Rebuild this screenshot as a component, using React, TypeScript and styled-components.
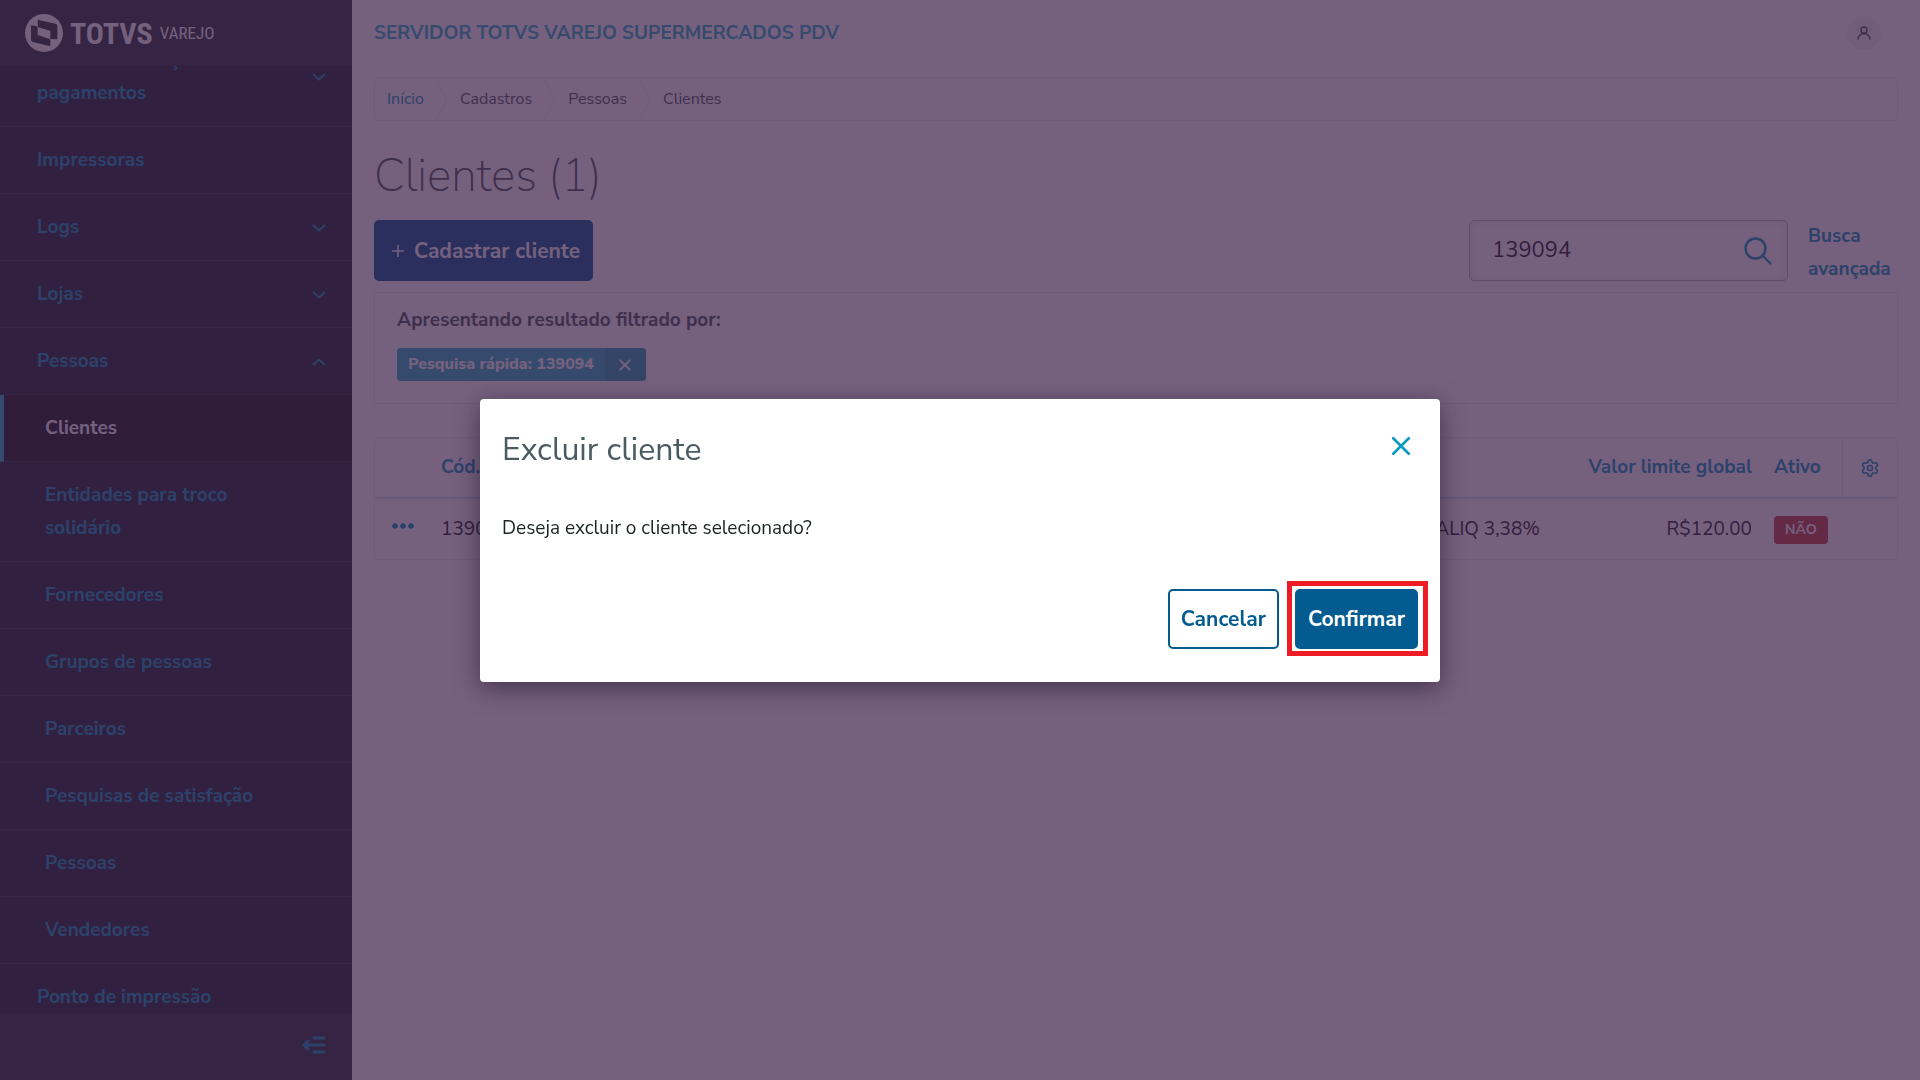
import React, { useLayoutEffect, useRef } from 'react';
import styled, { createGlobalStyle, css } from 'styled-components';
import { Settings } from 'lucide-react';

const c = {
  link: '#0c9abe',
  primary: '#045b8f',
  accent: '#29b6c5',
  text: '#1d2426',
  title: '#4a5c60',
  line: '#eceeee',
  danger: '#c64840',
};

const Global = createGlobalStyle`
  *, *::before, *::after { box-sizing: border-box; }
  body {
    margin: 0;
    background: #fff;
    color: ${c.text};
    font: 400 19px/33px "Nunito Sans", Lato, sans-serif;
  }
  button, input { font: inherit; color: inherit; }
  button { cursor: pointer; }
  a { color: ${c.link}; text-decoration: none; }
  ul, ol { list-style: none; margin: 0; padding: 0; }
  h1, h2, p { margin: 0; }
`;

const Shell = styled.div`
  display: flex;
  height: 100vh;
  overflow: hidden;
`;

const Sidebar = styled.aside`
  display: flex;
  flex-direction: column;
  flex: 0 0 352px;
  background: #2b3739;
`;

const Brand = styled.div`
  display: flex;
  align-items: center;
  flex: 0 0 66px;
  padding-left: 25px;
  gap: 7px;
  color: #fff;
  font-family: "Roboto Condensed", Roboto, sans-serif;
  svg { width: 38px; height: 38px; }
`;

const BrandName = styled.strong`
  font-size: 30px;
`;

const BrandLine = styled.span`
  font-size: 17px;
`;

const Menu = styled.nav`
  flex: 1;
  overflow-y: auto;
  scrollbar-width: none;
  background: #202b2f;
`;

const MenuLink = styled.a<{ $level?: number; $active?: boolean }>`
  display: flex;
  align-items: center;
  justify-content: space-between;
  gap: 16px;
  padding: 17px 26px 16px ${p => (p.$level ? 45 : 37)}px;
  border-bottom: 1px solid #2f3d41;
  color: ${c.link};
  font-weight: 700;
  ${p => p.$active && css`
    padding-left: 41px;
    border-left: 4px solid ${c.accent};
    background: #161f21;
    color: #fff;
  `}
`;

const MenuText = styled.span`
  max-width: 210px;
`;

const SidebarFooter = styled.div`
  display: flex;
  align-items: center;
  justify-content: flex-end;
  flex: 0 0 66px;
  padding: 0 26px 5px 0;
  border-top: 1px solid #2f3d41;
`;

const IconButton = styled.button`
  display: inline-grid;
  place-items: center;
  padding: 0;
  border: 0;
  background: none;
  color: ${c.link};
`;

const Main = styled.main`
  flex: 1;
  min-width: 0;
  padding: 0 22px;
`;

const TopBar = styled.header`
  display: flex;
  align-items: center;
  justify-content: space-between;
  height: 66px;
  padding-right: 17px;
  color: ${c.accent};
  font-weight: 700;
`;

const Avatar = styled(IconButton)`
  width: 34px;
  height: 34px;
  border-radius: 50%;
  background: #f2f4f4;
  color: ${c.title};
`;

const Crumbs = styled.ol`
  display: flex;
  height: 44px;
  margin-top: 11px;
  border: 1px solid ${c.line};
  border-radius: 4px;
  font-size: 16px;
  line-height: 42px;
`;

const Crumb = styled.li`
  display: flex;
  gap: 12px;
  padding-left: 12px;
  color: ${c.title};
  svg { width: 12px; height: 42px; }
`;

const PageTitle = styled.h1`
  margin: 25px 0 14px;
  color: ${c.title};
  font-size: 46px;
  font-weight: 200;
  line-height: 60px;
`;

const Toolbar = styled.div`
  display: flex;
  justify-content: space-between;
  align-items: center;
  height: 61px;
`;

const Button = styled.button<{ $primary?: boolean; $tall?: boolean }>`
  display: flex;
  align-items: center;
  justify-content: center;
  gap: 5px;
  height: ${p => (p.$tall ? 61 : 60)}px;
  padding: 2px 11px 0;
  border: 2px solid ${c.primary};
  border-radius: 5px;
  background: ${p => (p.$primary ? c.primary : '#fff')};
  color: ${p => (p.$primary ? '#fff' : c.primary)};
  font-size: 21px;
  font-weight: 700;
`;

const SearchArea = styled.div`
  display: flex;
  align-items: center;
  gap: 20px;
  a { width: 90px; padding-top: 4px; font-weight: 700; }
`;

const SearchBox = styled.div`
  display: flex;
  align-items: center;
  width: 319px;
  height: 61px;
  padding: 0 15px 0 22px;
  border: 1px solid #b0b8bc;
  border-radius: 5px;
  box-shadow: inset 0 0 10px #e6e8ea;
  input {
    flex: 1;
    min-width: 0;
    padding: 0;
    border: 0;
    outline: 0;
    background: none;
    font-size: 22px;
  }
`;

const Panel = styled.section`
  border: 1px solid ${c.line};
  border-radius: 4px;
`;

const FilterPanel = styled(Panel)`
  margin-top: 11px;
  padding: 11px 22px 22px;
  color: ${c.title};
  font-weight: 700;
`;

const Chip = styled.div`
  display: inline-flex;
  height: 33px;
  margin-top: 11px;
  border-radius: 4px;
  overflow: hidden;
  vertical-align: top;
  background: ${c.accent};
  color: #fff;
  font-size: 16px;
  font-weight: 800;
  span { padding: 0 11px; }
  button { width: 41px; background: #25a6b4; color: #fff; }
`;

const TablePanel = styled(Panel)`
  margin-top: 33px;
`;

const Table = styled.table`
  width: 100%;
  border-collapse: collapse;
  table-layout: fixed;
  white-space: nowrap;
`;

const Th = styled.th<{ $w?: number; $end?: boolean; $rule?: boolean }>`
  width: ${p => (p.$w ? `${p.$w}px` : 'auto')};
  height: 60px;
  padding: 0 11px;
  border-bottom: 2px solid #cfe0ee;
  border-left: ${p => (p.$rule ? `1px solid ${c.line}` : '0')};
  color: ${c.link};
  text-align: ${p => (p.$end ? 'right' : 'left')};
  ${IconButton} { width: 100%; vertical-align: middle; }
`;

const Td = styled.td<{ $end?: boolean; $gap?: boolean }>`
  height: 61px;
  padding: 0 ${p => (p.$gap ? 37 : 11)}px 0 11px;
  text-align: ${p => (p.$end ? 'right' : 'left')};
  ${IconButton} {
    margin-left: 5px;
    height: 33px;
    padding-bottom: 7px;
    vertical-align: middle;
  }
`;

const Tag = styled.span`
  display: inline-block;
  padding: 0 11px;
  border-radius: 4px;
  background: ${c.danger};
  color: #fff;
  font-size: 14px;
  font-weight: 700;
  line-height: 28px;
  vertical-align: middle;
`;

const Overlay = styled.div`
  position: fixed;
  inset: 0;
  display: flex;
  align-items: center;
  justify-content: center;
  background: rgba(59, 28, 71, 0.7);
`;

const Modal = styled.div`
  width: 50%;
  padding: 29px 22px 33px;
  border-radius: 4px;
  background: #fff;
  box-shadow: 0 6px 24px rgba(20, 8, 26, 0.5);
`;

const ModalHead = styled.div`
  display: flex;
  align-items: center;
  justify-content: space-between;
  height: 44px;
  h2 {
    color: ${c.title};
    font-size: 32px;
    font-weight: 400;
    line-height: 44px;
  }
`;

const CloseButton = styled(IconButton)`
  width: 34px;
  height: 36px;
  align-self: flex-start;
`;

const ModalText = styled.p`
  margin: 40px 0 44px;
`;

const Actions = styled.div`
  display: flex;
  justify-content: flex-end;
  gap: 16px;
`;

const Highlight = styled.div`
  position: relative;
  &::after {
    content: '';
    position: absolute;
    inset: -8px -10px -7px -8px;
    border: 5px solid #ee1c24;
    pointer-events: none;
  }
`;

const Logo = () => (
  <svg viewBox="0 0 114 114" aria-hidden="true">
    <circle cx="57" cy="57" r="57" fill="#fff" />
    <g fill="#2b3739" stroke="#2b3739" strokeWidth="4" strokeLinejoin="round">
      <path d="M40 20L91 31Q95 32 95 36V74L78 73V52Q78 49 75 48L41 38Z" />
      <path d="M20 36L36 39V62Q36 65 39 66L74 77V94L24 82Q20 81 20 77Z" />
    </g>
  </svg>
);

const Chevron = ({ up }: { up?: boolean }) => (
  <svg width="14" height="8" viewBox="0 0 14 8" fill="none" stroke="currentColor" strokeWidth="2">
    <path d={up ? 'M1 7L7 1.5L13 7' : 'M1 1L7 6.5L13 1'} />
  </svg>
);

const Cross = ({ size, width = 2 }: { size: number; width?: number }) => (
  <svg width={size} height={size} viewBox="0 0 18 18" fill="none" stroke="currentColor" strokeWidth={width} strokeLinecap="round">
    <path d="M2 2L16 16M16 2L2 16" />
  </svg>
);

const menu: { label: string; level?: number; active?: boolean; open?: boolean }[] = [
  { label: 'Formas e condições de pagamentos', open: false },
  { label: 'Impressoras' },
  { label: 'Logs', open: false },
  { label: 'Lojas', open: false },
  { label: 'Pessoas', open: true },
  { label: 'Clientes', level: 1, active: true },
  { label: 'Entidades para troco solidário', level: 1 },
  { label: 'Fornecedores', level: 1 },
  { label: 'Grupos de pessoas', level: 1 },
  { label: 'Parceiros', level: 1 },
  { label: 'Pesquisas de satisfação', level: 1 },
  { label: 'Pessoas', level: 1 },
  { label: 'Vendedores', level: 1 },
  { label: 'Ponto de impressão' },
];

const crumbs = ['Início', 'Cadastros', 'Pessoas', 'Clientes'];

export default function App() {
  const menuRef = useRef<HTMLElement>(null);

  useLayoutEffect(() => {
    if (menuRef.current) menuRef.current.scrollTop = 39;
  }, []);

  return (
    <>
      <Global />
      <Shell>
        <Sidebar>
          <Brand>
            <Logo />
            <BrandName>TOTVS</BrandName>
            <BrandLine>VAREJO</BrandLine>
          </Brand>
          <Menu ref={menuRef}>
            <ul>
              {menu.map((m, i) => (
                <li key={i}>
                  <MenuLink href="#" $level={m.level} $active={m.active}>
                    <MenuText>{m.label}</MenuText>
                    {m.open !== undefined && <Chevron up={m.open} />}
                  </MenuLink>
                </li>
              ))}
            </ul>
          </Menu>
          <SidebarFooter>
            <IconButton aria-label="Recolher menu">
              <svg width="24" height="18" viewBox="0 0 24 18" fill="none" stroke="currentColor" strokeWidth="3" strokeLinecap="round" strokeLinejoin="round">
                <path d="M12 2H22M3 9H22M12 16H22M6 5L2 9L6 13" />
              </svg>
            </IconButton>
          </SidebarFooter>
        </Sidebar>

        <Main>
          <TopBar>
            <span>SERVIDOR TOTVS VAREJO SUPERMERCADOS PDV</span>
            <Avatar aria-label="Perfil">
              <svg width="14" height="14" viewBox="0 0 14 14" fill="none" stroke="currentColor" strokeWidth="1.4">
                <circle cx="7" cy="4" r="3" />
                <path d="M1 13.5A6 6 0 0 1 13 13.5" />
              </svg>
            </Avatar>
          </TopBar>

          <Crumbs>
            {crumbs.map((label, i) => (
              <Crumb key={label}>
                {i === 0 ? <a href="#">{label}</a> : <span>{label}</span>}
                {i < crumbs.length - 1 && (
                  <svg viewBox="0 0 12 42" fill="none" stroke={c.line}>
                    <path d="M0 0L11 23L0 42" />
                  </svg>
                )}
              </Crumb>
            ))}
          </Crumbs>

          <PageTitle>Clientes (1)</PageTitle>

          <Toolbar>
            <Button $primary $tall>
              <svg width="22" height="22" viewBox="0 0 22 22" stroke="currentColor" strokeWidth="1.6">
                <path d="M5 10H17M11 4V16" />
              </svg>
              Cadastrar cliente
            </Button>
            <SearchArea>
              <SearchBox>
                <input aria-label="Buscar cliente" defaultValue="139094" />
                <IconButton aria-label="Buscar">
                  <svg width="28" height="28" viewBox="0 0 28 28" fill="none" stroke="currentColor" strokeWidth="2.4" strokeLinecap="round">
                    <circle cx="11.5" cy="11.5" r="10" />
                    <path d="M19 19L26.5 26.5" />
                  </svg>
                </IconButton>
              </SearchBox>
              <a href="#">Busca avançada</a>
            </SearchArea>
          </Toolbar>

          <FilterPanel>
            <p>Apresentando resultado filtrado por:</p>
            <Chip>
              <span>Pesquisa rápida: 139094</span>
              <IconButton aria-label="Remover filtro"><Cross size={12} width={3} /></IconButton>
            </Chip>
          </FilterPanel>

          <TablePanel>
            <Table>
              <thead>
                <tr>
                  <Th $w={55} />
                  <Th $w={120}>Cód.</Th>
                  <Th>Nome</Th>
                  <Th>Perfil</Th>
                  <Th $w={186} $end>Valor limite global</Th>
                  <Th $w={79}>Ativo</Th>
                  <Th $w={55} $rule>
                    <IconButton aria-label="Configurar colunas"><Settings size={20} strokeWidth={2} /></IconButton>
                  </Th>
                </tr>
              </thead>
              <tbody>
                <tr>
                  <Td>
                    <IconButton aria-label="Ações">
                      <svg width="24" height="6" viewBox="0 0 24 6" fill="currentColor">
                        <circle cx="4" cy="3" r="2.8" />
                        <circle cx="12" cy="3" r="2.8" />
                        <circle cx="20" cy="3" r="2.8" />
                      </svg>
                    </IconButton>
                  </Td>
                  <Td>139094</Td>
                  <Td />
                  <Td $end $gap>ALIQ 3,38%</Td>
                  <Td $end>R$120.00</Td>
                  <Td><Tag>NÃO</Tag></Td>
                  <Td />
                </tr>
              </tbody>
            </Table>
          </TablePanel>
        </Main>
      </Shell>

      <Overlay>
        <Modal role="dialog" aria-modal="true" aria-labelledby="modal-title">
          <ModalHead>
            <h2 id="modal-title">Excluir cliente</h2>
            <CloseButton aria-label="Fechar"><Cross size={20} width={2.4} /></CloseButton>
          </ModalHead>
          <ModalText>Deseja excluir o cliente selecionado?</ModalText>
          <Actions>
            <Button>Cancelar</Button>
            <Highlight><Button $primary>Confirmar</Button></Highlight>
          </Actions>
        </Modal>
      </Overlay>
    </>
  );
}
